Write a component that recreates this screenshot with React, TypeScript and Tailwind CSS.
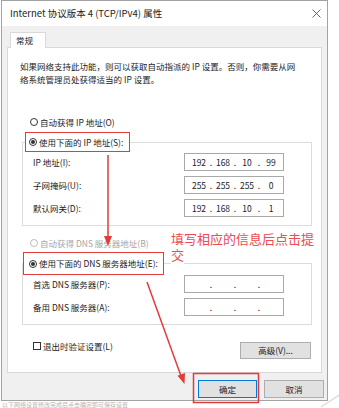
import React from "react";

function Radio({ checked, disabled }: { checked?: boolean; disabled?: boolean }) {
  return (
    <span
      className={
        "w-[8px] h-[8px] rounded-full border bg-white flex items-center justify-center shrink-0 " +
        (disabled ? "border-[#bcbcbc]" : "border-[#333333]")
      }
    >
      {checked ? <span className="w-[4px] h-[4px] rounded-full bg-[#333333]" /> : null}
    </span>
  );
}

function IpBox({ parts }: { parts: string[] }) {
  return (
    <div className="w-[100px] h-[18px] border border-[#a9a9a9] bg-white flex items-center pl-[4px] text-[8.5px] text-[#222]">
      {parts.map((p, i) => (
        <React.Fragment key={i}>
          <span className="w-[20px] text-center">{p}</span>
          {i < 3 ? <span className="w-[4px] text-center">.</span> : null}
        </React.Fragment>
      ))}
    </div>
  );
}

function Row({ label, parts }: { label: string; parts: string[] }) {
  return (
    <div className="flex items-center h-[18px]">
      <span className="w-[151px]">{label}</span>
      <IpBox parts={parts} />
    </div>
  );
}

export default function App() {
  return (
    <div className="relative w-[339px] h-[408px] overflow-hidden bg-white text-[#1c1c1c] font-['Noto_Sans_CJK_SC',sans-serif]">
      <div className="ml-[1px] w-[327px] h-[401px] border border-[#a3a3a3] flex flex-col">
        <div className="h-[25px] bg-white flex items-center justify-between pl-[8px] pr-[6px]">
          <span className="text-[9.5px]">Internet 协议版本 4 (TCP/IPv4) 属性</span>
          <svg width="9" height="9" viewBox="0 0 9 9">
            <path d="M0.5 0.5L8.5 8.5M8.5 0.5L0.5 8.5" stroke="#555" strokeWidth="0.9" />
          </svg>
        </div>
        <div className="flex-1 bg-[#f0f0f0] pl-[5px] pr-[3px] pt-[6px] flex flex-col">
          <div className="relative z-10 ml-[3px] w-[36px] h-[16px] -mb-[1px] bg-white border border-b-0 border-[#d9d9d9] pl-[5px] text-[8.5px] leading-[15px]">
            常规
          </div>
          <div className="w-[315px] h-[326px] bg-white border border-[#d9d9d9] pt-[12px] pl-[12px] pr-[9px] text-[8.5px]">
            <p className="leading-[13px]">
              如果网络支持此功能，则可以获取自动指派的 IP 设置。否则，你需要从网
              <br />
              络系统管理员处获得适当的 IP 设置。
            </p>
            <div className="mt-[29px] h-[14px] flex items-center gap-[2px] pl-[10px]">
              <Radio />
              <span>自动获得 IP 地址(O)</span>
            </div>
            <fieldset className="mt-[3px] ml-[2px] w-[290px] border border-[#dcdcdc]">
              <legend className="ml-[2px] h-[20px] pl-[3px] pr-[6px] border-[1.5px] border-[#e23b3b] bg-white flex items-center gap-[2px]">
                <Radio checked />
                <span>使用下面的 IP 地址(S):</span>
              </legend>
              <div className="pl-[10px] pt-[1px] pb-[8px] flex flex-col gap-[5px]">
                <Row label="IP 地址(I):" parts={["192", "168", "10", "99"]} />
                <Row label="子网掩码(U):" parts={["255", "255", "255", "0"]} />
                <Row label="默认网关(D):" parts={["192", "168", "10", "1"]} />
              </div>
            </fieldset>
            <div className="mt-[10px] h-[14px] flex items-center gap-[2px] pl-[10px] text-[#a6a6a6]">
              <Radio disabled />
              <span>自动获得 DNS 服务器地址(B)</span>
            </div>
            <fieldset className="mt-[2px] ml-[2px] w-[290px] border border-[#dcdcdc]">
              <legend className="ml-[0px] h-[23px] px-[5px] border-[1.5px] border-[#e23b3b] bg-white flex items-center gap-[2px]">
                <Radio checked />
                <span>使用下面的 DNS 服务器地址(E):</span>
              </legend>
              <div className="pl-[10px] pb-[8px] flex flex-col gap-[5px]">
                <Row label="首选 DNS 服务器(P):" parts={["", "", "", ""]} />
                <Row label="备用 DNS 服务器(A):" parts={["", "", "", ""]} />
              </div>
            </fieldset>
            <div className="mt-[14px] flex justify-between items-start">
              <div className="ml-[13px] h-[14px] flex items-center gap-[2px]">
                <span className="w-[8px] h-[8px] border border-[#333333] bg-white" />
                <span>退出时验证设置(L)</span>
              </div>
              <button className="mt-[3px] mr-[1px] w-[71px] h-[17px] bg-[#e1e1e1] border border-[#adadad] text-[8.5px] leading-[15px]">
                高级(V)...
              </button>
            </div>
          </div>
          <div className="mt-[7px] flex justify-end gap-[7px] text-[8.5px]">
            <button className="w-[59px] h-[18px] bg-[#e1e1e1] border border-[#0078d7] leading-[16px]">确定</button>
            <button className="w-[60px] h-[18px] bg-[#e1e1e1] border border-[#adadad] leading-[16px]">取消</button>
          </div>
        </div>
      </div>
      <div className="pl-[2px] text-[6px] leading-[7px] text-[#b5b5b5] whitespace-nowrap">
        以下网络设置修改完成后点击确定即可保存设置
      </div>

      <div className="absolute left-[171px] top-[231px] w-[150px] text-[13px] leading-[16px] text-[#ee4a4f]">
        <span className="bg-white">填写相应的信息后点击提交</span>
      </div>

      <svg className="absolute left-0 top-0 pointer-events-none" width="339" height="408" viewBox="0 0 339 408">
        <line x1="108" y1="155" x2="108" y2="238" stroke="#e23b3b" strokeWidth="1.5" />
        <polygon points="104,236 112,236 108,246" fill="#e23b3b" />
        <line x1="147" y1="282" x2="181" y2="376" stroke="#e23b3b" strokeWidth="1.5" />
        <polygon points="184.5,384 185,373 177.5,375.8" fill="#e23b3b" />
        <rect x="193.5" y="373.5" width="65" height="29" fill="none" stroke="#e23b3b" strokeWidth="1.5" />
        <line x1="321" y1="407" x2="339" y2="395" stroke="#dddddd" strokeWidth="1.5" />
      </svg>
    </div>
  );
}
